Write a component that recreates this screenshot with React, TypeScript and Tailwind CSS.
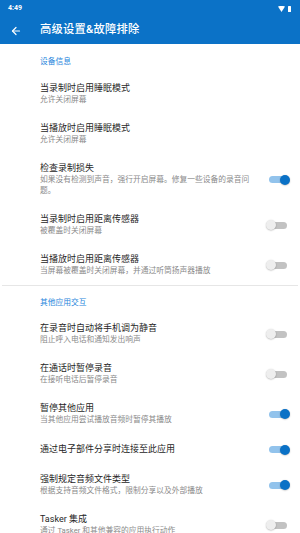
import { ArrowLeft } from 'lucide-react';

interface Setting {
  title: string;
  desc?: string;
  on?: boolean;
  toggle?: boolean;
}

const device: Setting[] = [
  { title: '当录制时启用睡眠模式', desc: '允许关闭屏幕' },
  { title: '当播放时启用睡眠模式', desc: '允许关闭屏幕' },
  { title: '检查录制损失', desc: '如果没有检测到声音，强行开启屏幕。修复一些设备的录音问题。', toggle: true, on: true },
  { title: '当录制时启用距离传感器', desc: '被覆盖时关闭屏幕', toggle: true },
  { title: '当播放时启用距离传感器', desc: '当屏幕被覆盖时关闭屏幕，并通过听筒扬声器播放', toggle: true },
];

const apps: Setting[] = [
  { title: '在录音时自动将手机调为静音', desc: '阻止呼入电话和通知发出响声', toggle: true },
  { title: '在通话时暂停录音', desc: '在接听电话后暂停录音', toggle: true },
  { title: '暂停其他应用', desc: '当其他应用尝试播放音频时暂停其播放', toggle: true, on: true },
  { title: '通过电子部件分享时连接至此应用', toggle: true, on: true },
  { title: '强制规定音频文件类型', desc: '根据支持音频文件格式，限制分享以及外部播放', toggle: true, on: true },
  { title: 'Tasker 集成', desc: '通过 Tasker 和其他兼容的应用执行动作', toggle: true },
];

function Toggle({ on }: { on?: boolean }) {
  return (
    <div className="relative w-[24px] h-[10px] shrink-0">
      <div className={`absolute left-[3px] top-[1.5px] w-[18px] h-[7px] rounded-full ${on ? 'bg-[#92c3ec]' : 'bg-[#c2c2c2]'}`} />
      <div
        className={`absolute top-0 w-[10px] h-[10px] rounded-full shadow-[0_0.5px_1.5px_rgba(0,0,0,0.3)] ${on ? 'left-[14px] bg-[#0a71c6]' : 'left-0 bg-[#eeeeee]'}`}
      />
    </div>
  );
}

function Row({ item }: { item: Setting }) {
  return (
    <div className={`flex items-center pl-[40px] pr-[10px] ${item.desc ? 'py-[9px]' : 'py-[10px]'}`}>
      <div className="w-[212px]">
        <p className="text-[9px] leading-[11px] text-[#262626]">{item.title}</p>
        {item.desc && <p className="text-[7.75px] leading-[11px] text-[#8a8a8a]">{item.desc}</p>}
      </div>
      <div className="flex-1" />
      {item.toggle && <Toggle on={item.on} />}
    </div>
  );
}

function Header({ label, first }: { label: string; first?: boolean }) {
  return (
    <p className={`pl-[40px] text-[7.75px] leading-[12px] text-[#1f86dc] ${first ? 'pt-[12px] pb-[6px]' : 'pt-[11px] pb-[5px]'}`}>
      {label}
    </p>
  );
}

export default function App() {
  return (
    <div className="w-[300px] h-[533px] overflow-hidden bg-white font-['Roboto','Noto_Sans_CJK_SC',sans-serif]">
      {/* App bar */}
      <div className="bg-[#0b72c7] h-[44px] text-white">
        <div className="flex items-center justify-between h-[17px] pl-[8px] pr-[9px]">
          <span className="text-[7px] font-bold leading-none">4:49</span>
          <div className="flex items-center gap-[3px]">
            <svg width="7" height="6" viewBox="0 0 7 6">
              <path d="M0 0.5 Q3.5 -0.8 7 0.5 L3.5 6 Z" fill="white" />
            </svg>
            <div className="w-[3.5px] h-[6px] bg-white rounded-[0.5px]" />
          </div>
        </div>
        <div className="flex items-center h-[27px]">
          <ArrowLeft className="w-[12px] h-[12px] ml-[10px] mr-[18px]" strokeWidth={2.4} />
          <span className="text-[11.3px] font-medium tracking-[0.2px]">高级设置&amp;故障排除</span>
        </div>
      </div>

      <Header label="设备信息" first />
      {device.map((item) => (
        <Row key={item.title} item={item} />
      ))}

      <div className="mx-[2px] h-[1px] bg-[#e6e6e6]" />

      <Header label="其他应用交互" />
      {apps.map((item) => (
        <Row key={item.title} item={item} />
      ))}
    </div>
  );
}
